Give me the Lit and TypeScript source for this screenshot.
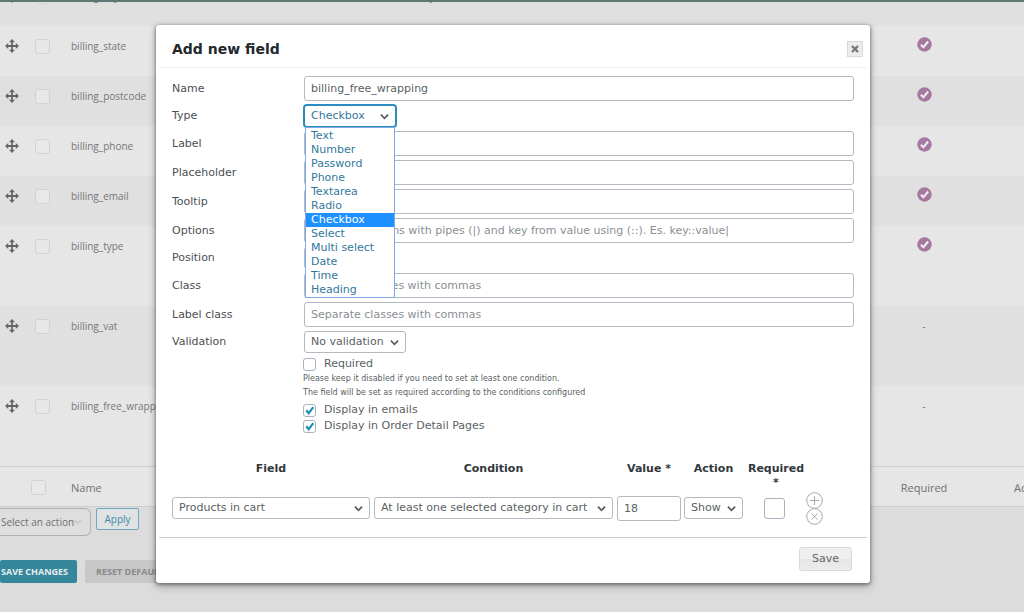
import { LitElement, html, css, svg } from "lit";
import { customElement, state } from "lit/decorators.js";

interface FieldRow {
  name: string;
  label?: string;
  required: boolean;
  tall?: boolean;
}

const ROWS: FieldRow[] = [
  { name: "billing_city", label: "Town / City", required: true },
  { name: "billing_state", required: true },
  { name: "billing_postcode", required: true },
  { name: "billing_phone", required: true },
  { name: "billing_email", required: true },
  { name: "billing_type", required: true, tall: true },
  { name: "billing_vat", required: false, tall: true },
  { name: "billing_free_wrapping", required: false, tall: true },
];

const TYPES = [
  "Text", "Number", "Password", "Phone", "Textarea", "Radio",
  "Checkbox", "Select", "Multi select", "Date", "Time", "Heading",
];

const chevron = html`<svg class="chevron" viewBox="0 0 10 10" aria-hidden="true">
  ${svg`<path d="M1 3l4 4 4-4" fill="none" stroke="currentColor" stroke-width="2"/>`}
</svg>`;

/** Rows of the checkout fields, with the bulk actions below them. */
@customElement("fields-page")
export class FieldsPage extends LitElement {
  static styles = css`
    :host {
      display: flex;
      flex-direction: column;
      justify-content: flex-end;
      height: 100vh;
      overflow: hidden;
      box-sizing: border-box;
      padding-bottom: 29px;
      background: #dcdcdc;
      color: #777;
      font: 10px/16px "Open Sans", "Noto Sans", sans-serif;
    }
    * { box-sizing: border-box; }
    table {
      width: 100%;
      flex: none;
      table-layout: fixed;
      border-collapse: separate;
      border-spacing: 0;
      background: #e6e6e6;
    }
    .c-move { width: 24px; }
    .c-check { width: 47px; }
    .c-name { width: 312px; }
    .c-required { width: 160px; }
    .c-actions { width: 20px; }
    td, th { padding: 0; vertical-align: top; text-align: left; font-weight: 400; }
    tbody td { height: 50px; padding-top: 12px; }
    .tall td { height: 80px; }
    tbody tr:nth-child(odd) { background: #e0e0e0; }
    tfoot td, tfoot th {
      height: 41px;
      padding-top: 13px;
      border-top: 1px solid #d0d0d0;
      border-bottom: 1px solid #cdcdcd;
      font-size: 11px;
      color: #707070;
    }
    td.center, th.center { text-align: center; }
    th.edge { padding-left: 10px; overflow: hidden; white-space: nowrap; }
    .move { display: block; width: 14px; height: 14px; margin: 1px 0 0 5px; fill: #666; }
    .tick { display: block; width: 15px; height: 15px; margin: -1px auto 0; }
    input[type="checkbox"] {
      appearance: none;
      display: block;
      width: 15px;
      height: 15px;
      margin: 1px 0 0 11px;
      border: 1px solid #d2d2d2;
      border-radius: 3px;
      background: #e8e8e8;
    }
    tfoot input[type="checkbox"] { margin: 0 0 0 7px; }
    .bulk { display: flex; align-items: flex-start; gap: 5px; height: 53px; flex: none; padding-top: 1px; }
    .pick { position: relative; width: 91px; }
    select {
      appearance: none;
      width: 100%;
      height: 28px;
      padding: 0 0 0 1px;
      border: 1px solid #aeb2b6;
      border-left: 0;
      border-radius: 0 6px 6px 0;
      background: #dedede;
      color: #707070;
      font: inherit;
    }
    .chevron { position: absolute; right: 9px; top: 9px; width: 9px; height: 9px; color: #cacaca; }
    button { font: inherit; padding: 0; flex: none; }
    .apply {
      width: 43px;
      height: 22px;
      border: 1px solid #6fa9bd;
      border-radius: 2px;
      background: #e0e2e3;
      color: #3f8ba5;
    }
    .buttons { display: flex; gap: 8px; flex: none; }
    .buttons button {
      height: 23px;
      border: 0;
      border-radius: 2px;
      font-size: 9px;
      font-weight: 700;
      white-space: nowrap;
    }
    .buttons .save { width: 77px; padding: 0 8px 0 0; background: #35879b; color: #e6eef0; }
    .buttons .reset { padding: 0 11px; background: #c8c8c8; color: #888; }
  `;

  render() {
    return html`
      <table>
        <colgroup>
          <col class="c-move"><col class="c-check"><col class="c-name"><col>
          <col class="c-required"><col class="c-actions">
        </colgroup>
        <tbody>
          ${ROWS.map((r) => html`<tr class=${r.tall ? "tall" : ""}>
            <td>
              <svg class="move" viewBox="0 0 14 14" aria-hidden="true">
                <path d="M7 0l3 3.200H7.900v2.900h2.900V4L14 7l-3.200 3V7.900H7.900v2.900H10L7 14l-3-3.200h2.100V7.900H3.200V10L0 7l3.200-3v2.100h2.900V3.200H4z"/>
              </svg>
            </td>
            <td><input type="checkbox" aria-label=${"Select " + r.name}></td>
            <td>${r.name}</td>
            <td>${r.label ?? ""}</td>
            <td class="center">${r.required
              ? html`<svg class="tick" viewBox="0 0 15 15" role="img" aria-label="Yes">
                  <circle cx="7.500" cy="7.500" r="7.200" fill="#a6779f"/>
                  <path d="M3.900 7.800l2.500 2.500 4.700-5.800" fill="none" stroke="#eee" stroke-width="2.100"/>
                </svg>`
              : "-"}</td>
            <td></td>
          </tr>`)}
        </tbody>
        <tfoot>
          <tr>
            <td></td>
            <td><input type="checkbox" aria-label="Select all"></td>
            <th>Name</th>
            <th></th>
            <th class="center">Required</th>
            <th class="edge">Actions</th>
          </tr>
        </tfoot>
      </table>
      <div class="bulk">
        <div class="pick">
          <select aria-label="Bulk action"><option>Select an action</option></select>
          ${chevron}
        </div>
        <button class="apply">Apply</button>
      </div>
      <div class="buttons">
        <button class="save">SAVE CHANGES</button>
        <button class="reset">RESET DEFAULT FIELDS</button>
      </div>
    `;
  }
}

/** Dialog for the settings of a new field. */
@customElement("field-dialog")
export class FieldDialog extends LitElement {
  @state() private type = "Checkbox";

  static styles = css`
    :host {
      display: block;
      box-sizing: border-box;
      background: #fff;
      border-radius: 3px;
      box-shadow: 0 1px 3px 1px rgba(0, 0, 0, 0.3), 0 3px 8px rgba(0, 0, 0, 0.3);
      color: #5a5f64;
      font: 11px/14px "DejaVu Sans", sans-serif;
    }
    * { box-sizing: border-box; }
    header {
      display: flex;
      align-items: center;
      justify-content: space-between;
      height: 43px;
      margin: 0 3px;
      padding: 5px 4px 0 13px;
      border-bottom: 1px solid #f0f0f0;
    }
    h2 { margin: 0; font-size: 14px; line-height: 18px; color: #23282d; }
    .close {
      display: grid;
      place-items: center;
      width: 16px;
      height: 16px;
      padding: 0;
      border: 1px solid #d8d8d8;
      background: #ececec;
    }
    .close svg { width: 8px; height: 8px; }
    .form {
      display: grid;
      grid-template-columns: 128px 1fr;
      column-gap: 4px;
      row-gap: 4px;
      align-items: center;
      padding: 8px 16px 0;
    }
    .form label { color: #4c4f53; }
    input, select, button { font: inherit; color: inherit; margin: 0; }
    input[type="text"], select {
      display: block;
      width: 100%;
      height: 25px;
      padding: 0 6px;
      border: 1px solid #b4b9c2;
      border-radius: 3px;
      background: #fff;
    }
    select { appearance: none; height: 22px; }
    ::placeholder { color: #8a8f94; opacity: 1; }
    .pick { position: relative; }
    .chevron {
      position: absolute;
      right: 7px;
      top: 7px;
      width: 9px;
      height: 9px;
      pointer-events: none;
    }
    .type { width: 92px; }
    .type select {
      border-color: #2a8cc0;
      box-shadow: 0 0 0 1px #2a8cc0;
      color: #32789c;
    }
    .position { width: 80px; }
    .validation { width: 102px; }
    .menu {
      position: absolute;
      z-index: 1;
      top: 22px;
      left: 1px;
      right: 1px;
      margin: 0;
      padding: 1px 0 0;
      list-style: none;
      border: 1px solid #7fa8e6;
      background: #fff;
      color: #32789c;
    }
    .menu li { height: 14px; line-height: 14px; padding-left: 5px; }
    .menu .on { background: #1e90ff; color: #fff; }
    .checks { padding: 3px 16px 0 147px; }
    .check { display: flex; align-items: center; gap: 8px; height: 16px; }
    .check input, .cond input[type="checkbox"] {
      appearance: none;
      width: 13px;
      height: 13px;
      border: 1px solid #a9b2bd;
      border-radius: 3px;
      background: #fff;
    }
    .box { display: grid; }
    .box > * { grid-area: 1 / 1; }
    .box svg { width: 13px; height: 13px; pointer-events: none; display: none; }
    .box input:checked + svg { display: block; }
    .checks p { margin: 0; font-size: 8px; line-height: 14px; }
    .checks p + .check { margin-top: 2px; }
    .cond {
      width: calc(100% - 32px);
      margin: 28px 16px 0;
      table-layout: fixed;
      border-collapse: collapse;
    }
    .cond th, .cond td { padding: 0 4px 0 0; text-align: center; }
    .cond th { height: 30px; vertical-align: top; color: #32373c; }
    .cond td { vertical-align: middle; }
    .w-field { width: 202px; }
    .w-value { width: 67px; }
    .w-action { width: 62px; }
    .w-required { width: 60px; }
    .w-tools { width: 48px; }
    .cond .snug { padding-right: 3px; }
    .cond .last { padding-right: 0; }
    .cond input[type="checkbox"] { width: 21px; height: 21px; display: block; margin: 0 auto; }
    .tools button {
      display: block;
      width: 17px;
      height: 16px;
      padding: 0;
      border: 0;
      background: none;
    }
    .tools svg { display: block; width: 17px; height: 17px; fill: none; stroke: #a8a8a8; }
    footer {
      display: flex;
      justify-content: flex-end;
      margin: 13px 3px 0;
      padding: 9px 15px 12px;
      border-top: 1px solid #ccc;
    }
    .save {
      width: 53px;
      height: 24px;
      padding: 0;
      border: 1px solid #d8d8d8;
      border-radius: 3px;
      background: linear-gradient(#efefef 50%, #e5e5e5 50%, #ececec);
      color: #666;
    }
  `;

  private text(id: string, label: string, value = "", placeholder = "") {
    return html`<label for=${id}>${label}</label>
      <input type="text" id=${id} .value=${value} placeholder=${placeholder}>`;
  }

  private pick(cls: string, id: string, label: string, value: string) {
    return html`<div class="pick ${cls}">
      <select id=${id} aria-label=${label}><option>${value}</option></select>${chevron}
    </div>`;
  }

  private check(label: string, checked: boolean) {
    return html`<label class="check">
      <span class="box">
        <input type="checkbox" .checked=${checked}>
        <svg viewBox="0 0 13 13" aria-hidden="true">
          <path d="M3.200 6.300l2.500 2.900 4.600-6" fill="none" stroke="#1e8cbe" stroke-width="2.200"/>
        </svg>
      </span>
      ${label}
    </label>`;
  }

  render() {
    return html`
      <header>
        <h2>Add new field</h2>
        <button class="close" aria-label="Close">
          <svg viewBox="0 0 8 8"><path d="M1 1l6 6M7 1L1 7" stroke="#777" stroke-width="2.400"/></svg>
        </button>
      </header>
      <div class="form">
        ${this.text("name", "Name", "billing_free_wrapping")}
        <label for="type">Type</label>
        <div class="pick type">
          <select id="type" .value=${this.type}>
            ${TYPES.map((t) => html`<option ?selected=${t === this.type}>${t}</option>`)}
          </select>
          ${chevron}
          <ul class="menu" role="listbox" aria-label="Type">
            ${TYPES.map((t) => html`<li
              role="option"
              aria-selected=${t === this.type ? "true" : "false"}
              class=${t === this.type ? "on" : ""}
              @click=${() => (this.type = t)}
            >${t}</li>`)}
          </ul>
        </div>
        ${this.text("label", "Label")}
        ${this.text("placeholder", "Placeholder")}
        ${this.text("tooltip", "Tooltip")}
        ${this.text("options", "Options", "", "Separate options with pipes (|) and key from value using (::). Es. key::value|")}
        <label for="position">Position</label>
        ${this.pick("position", "position", "Position", "")}
        ${this.text("class", "Class", "", "Separate classes with commas")}
        ${this.text("label-class", "Label class", "", "Separate classes with commas")}
        <label for="validation">Validation</label>
        ${this.pick("validation", "validation", "Validation", "No validation")}
      </div>
      <div class="checks">
        ${this.check("Required", false)}
        <p>Please keep it disabled if you need to set at least one condition.</p>
        <p>The field will be set as required according to the conditions configured</p>
        ${this.check("Display in emails", true)}
        ${this.check("Display in Order Detail Pages", true)}
      </div>
      <table class="cond">
        <colgroup>
          <col class="w-field"><col><col class="w-value"><col class="w-action">
          <col class="w-required"><col class="w-tools">
        </colgroup>
        <thead>
          <tr>
            <th>Field</th><th>Condition</th><th class="snug">Value *</th><th class="snug">Action</th>
            <th class="last">Required *</th><td class="last"></td>
          </tr>
        </thead>
        <tbody>
          <tr>
            <td>${this.pick("", "c-field", "Field", "Products in cart")}</td>
            <td>${this.pick("", "c-cond", "Condition", "At least one selected category in cart")}</td>
            <td class="snug"><input type="text" aria-label="Value" .value=${"18"}></td>
            <td class="snug">${this.pick("", "c-action", "Action", "Show")}</td>
            <td><input type="checkbox" aria-label="Required"></td>
            <td class="tools last">
              <button aria-label="Add condition">
                <svg viewBox="0 0 17 17"><circle cx="8.500" cy="8.500" r="7.800"/><path d="M8.500 4v9M4 8.500h9"/></svg>
              </button>
              <button aria-label="Remove condition">
                <svg viewBox="0 0 17 17"><circle cx="8.500" cy="8.500" r="7.800"/><path d="M5.500 5.500l6 6M11.500 5.500l-6 6"/></svg>
              </button>
            </td>
          </tr>
        </tbody>
      </table>
      <footer><button class="save">Save</button></footer>
    `;
  }
}

@customElement("app-root")
export class AppRoot extends LitElement {
  static styles = css`
    :host { display: block; position: relative; height: 100vh; overflow: hidden; }
    .bar { position: absolute; top: 0; left: 0; right: 0; height: 2px; background: #5f7775; }
    .overlay { position: absolute; inset: 0; padding: 25px 154px 0 156px; }
  `;

  render() {
    return html`
      <fields-page></fields-page>
      <div class="bar"></div>
      <div class="overlay"><field-dialog role="dialog" aria-label="Add new field"></field-dialog></div>
    `;
  }
}
